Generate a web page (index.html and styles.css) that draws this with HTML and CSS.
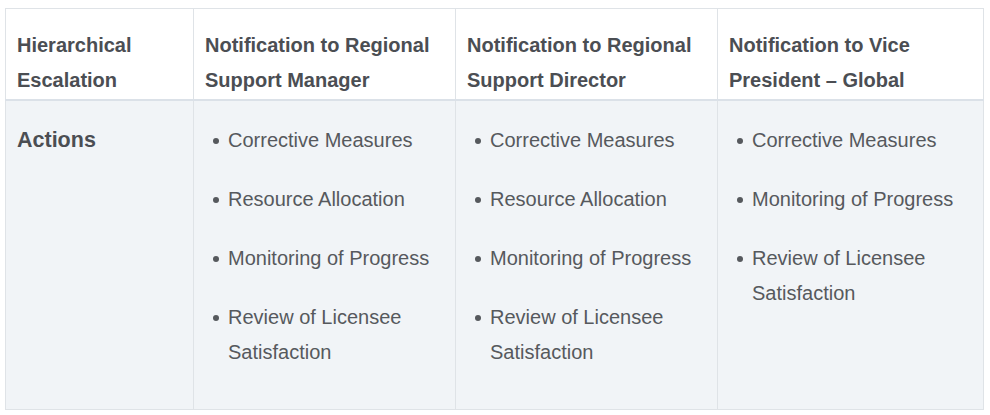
FILE: index.html
```html
<!DOCTYPE html>
<html lang="en">
<head>
<meta charset="utf-8">
<title>Hierarchical Escalation</title>
<link rel="stylesheet" href="styles.css">
</head>
<body>
<div class="wrap">
<table class="esc">
  <colgroup>
    <col class="c1"><col class="c2"><col class="c3"><col class="c4">
  </colgroup>
  <thead>
    <tr>
      <th>Hierarchical Escalation</th>
      <th>Notification to Regional Support Manager</th>
      <th>Notification to Regional Support Director</th>
      <th>Notification to Vice President – Global</th>
    </tr>
  </thead>
  <tbody>
    <tr>
      <td class="label">Actions</td>
      <td>
        <ul>
          <li>Corrective Measures</li>
          <li>Resource Allocation</li>
          <li>Monitoring of Progress</li>
          <li>Review of Licensee Satisfaction</li>
        </ul>
      </td>
      <td>
        <ul>
          <li>Corrective Measures</li>
          <li>Resource Allocation</li>
          <li>Monitoring of Progress</li>
          <li>Review of Licensee Satisfaction</li>
        </ul>
      </td>
      <td>
        <ul>
          <li>Corrective Measures</li>
          <li>Monitoring of Progress</li>
          <li>Review of Licensee Satisfaction</li>
        </ul>
      </td>
    </tr>
  </tbody>
</table>
</div>
</body>
</html>
```
FILE: styles.css
```css
html, body {
  margin: 0;
  padding: 0;
  background: #ffffff;
}
.wrap {
  padding: 8px 7px 0 5px;
}
.esc {
  width: 978px;
  border-collapse: collapse;
  table-layout: fixed;
  font-family: "Liberation Sans", Arial, sans-serif;
  font-size: 20px;
  line-height: 35px;
}
.c1 { width: 188px; }
.c2 { width: 262px; }
.c3 { width: 262px; }
.c4 { width: 266px; }
.esc th {
  text-align: left;
  font-weight: bold;
  color: #4b4e53;
  background: #ffffff;
  border: 1px solid #dfe3e7;
  border-bottom: 2px solid #dbe1e8;
  padding: 19px 11px 1px 11px;
  vertical-align: top;
}
.esc td {
  color: #56595d;
  background: #f1f4f7;
  border: 1px solid #dfe3e7;
  padding: 22px 11px 15px 11px;
  vertical-align: top;
}
.esc td.label {
  font-weight: bold;
  font-size: 21.5px;
  color: #4b4e53;
}
.esc ul {
  margin: 0;
  padding: 0 0 0 23px;
  list-style: none;
}
.esc li {
  margin: 0 0 24px 0;
}
.esc li::before {
  content: "";
  display: inline-block;
  width: 6px;
  height: 6px;
  border-radius: 50%;
  background: #56595d;
  margin-left: -15px;
  margin-right: 9px;
  vertical-align: 3px;
}
```
